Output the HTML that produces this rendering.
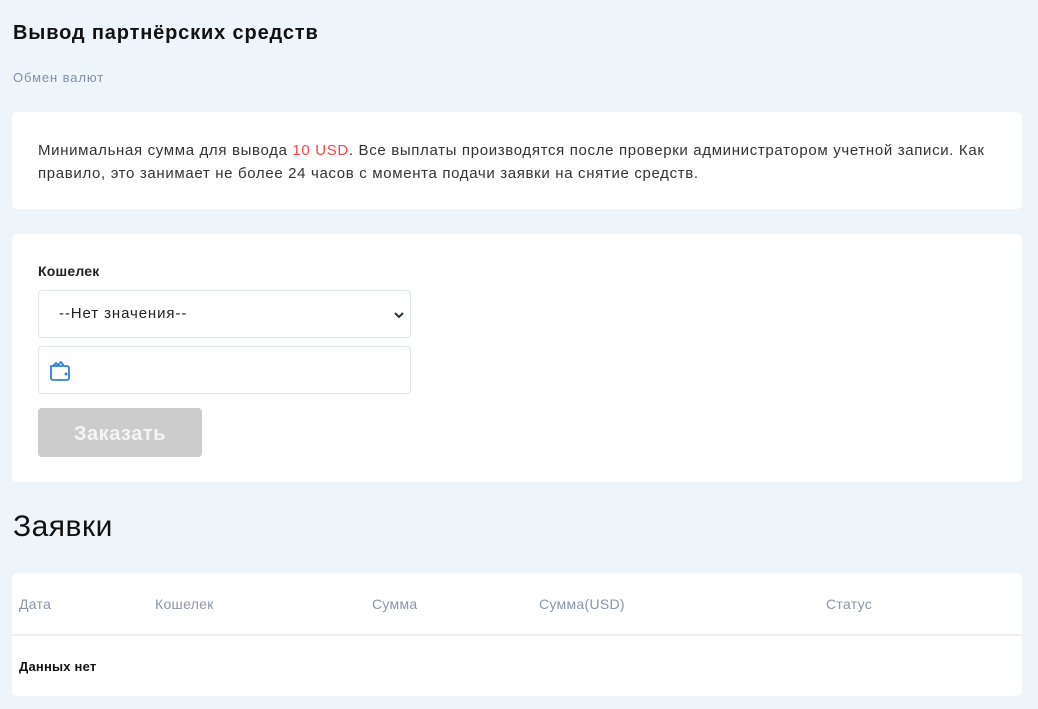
<!DOCTYPE html>
<html><head><meta charset="utf-8"><style>
*{box-sizing:border-box;margin:0;padding:0}
body{width:1038px;height:709px;background:#edf4fa;font-family:"Liberation Sans",sans-serif;color:#1a1a1a;position:relative;overflow:hidden}
.a{position:absolute;white-space:nowrap}
.card{position:absolute;left:12px;width:1010px;background:#fff;border-radius:5px}
.box{position:absolute;left:38px;width:373px;height:48px;border:1px solid #dfe4ec;border-radius:4px;background:#fff}
</style></head><body>
<div class="a" style="left:13px;top:22px;font-size:20px;font-weight:bold;color:#111;letter-spacing:0.85px">Вывод партнёрских средств</div>
<div class="a" style="left:13px;top:70px;font-size:13px;color:#8090a4;letter-spacing:0.9px">Обмен валют</div>
<div class="card" style="top:112px;height:97px"></div>
<div class="a" style="left:38px;top:139px;font-size:15px;line-height:23px;color:#333;letter-spacing:0.66px">Минимальная сумма для вывода <span style="color:#f44">10 USD</span>. Все выплаты производятся после проверки администратором учетной записи. Как<br>правило, это занимает не более 24 часов с момента подачи заявки на снятие средств.</div>
<div class="card" style="top:234px;height:248px"></div>
<div class="a" style="left:38px;top:263px;font-size:14px;font-weight:bold;color:#222;letter-spacing:0.2px">Кошелек</div>
<div class="box" style="top:290px"></div>
<div class="a" style="left:59px;top:305px;font-size:15px;color:#222;letter-spacing:0.9px">--Нет значения--</div>
<svg class="a" style="left:393px;top:310px" width="12" height="10" viewBox="0 0 12 10"><path d="M2 3l4 4 4-4" stroke="#333" stroke-width="2" fill="none"/></svg>
<div class="box" style="top:346px"></div>
<svg class="a" style="left:49px;top:360px" width="22" height="22" viewBox="0 0 22 22"><path d="M2 6h16a2 2 0 0 1 2 2v10a2 2 0 0 1-2 2H4a2 2 0 0 1-2-2V6z M4 6l3-3 2 2 3-3 3 4" stroke="#2e7fe0" stroke-width="1.8" fill="none" stroke-linejoin="round"/><circle cx="17" cy="14" r="1.5" fill="#2e7fe0"/></svg>
<div class="a" style="left:38px;top:408px;width:164px;height:49px;background:#cccccc;border-radius:4px;color:#f4f4f4;font-size:20px;font-weight:bold;text-align:center;line-height:53px;letter-spacing:0.5px">Заказать</div>
<div class="a" style="left:13px;top:510px;font-size:30px;color:#111;letter-spacing:0.5px">Заявки</div>
<div class="card" style="top:573px;height:123px"></div>
<div class="a" style="left:12px;top:634px;width:1010px;height:2px;background:#edf1f6"></div>
<div class="a" style="left:19px;top:596px;font-size:14px;color:#8a94a8;letter-spacing:0.3px">Дата</div>
<div class="a" style="left:155px;top:596px;font-size:14px;color:#8a94a8;letter-spacing:0.3px">Кошелек</div>
<div class="a" style="left:372px;top:596px;font-size:14px;color:#8a94a8;letter-spacing:0.3px">Сумма</div>
<div class="a" style="left:539px;top:596px;font-size:14px;color:#8a94a8;letter-spacing:0.3px">Сумма(USD)</div>
<div class="a" style="left:826px;top:596px;font-size:14px;color:#8a94a8;letter-spacing:0.3px">Статус</div>
<div class="a" style="left:19px;top:659px;font-size:13px;font-weight:bold;color:#111;letter-spacing:0.2px">Данных нет</div>
</body></html>
